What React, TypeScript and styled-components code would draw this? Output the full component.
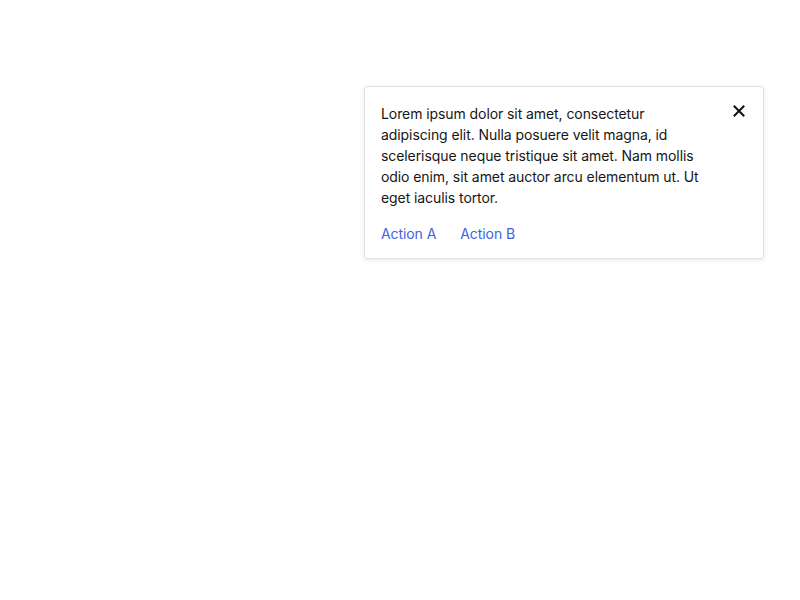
import React from 'react';
import styled, { createGlobalStyle } from 'styled-components';

const GlobalStyle = createGlobalStyle`
  html, body {
    margin: 0;
    padding: 0;
    background: #ffffff;
    font-family: Inter, "Noto Sans", sans-serif;
  }
`;

const Page = styled.div`
  display: flex;
  justify-content: flex-end;
  padding: 86px 36px 0 0;
  min-height: 600px;
  box-sizing: border-box;
`;

const Card = styled.div`
  width: 400px;
  box-sizing: border-box;
  background: #ffffff;
  border: 1px solid #e2e2e2;
  border-radius: 3px;
  box-shadow: 0 1px 4px rgba(0, 0, 0, 0.1);
  padding: 16px 16px 14px 16px;
  align-self: flex-start;
`;

const Header = styled.div`
  display: flex;
  align-items: flex-start;
  gap: 12px;
`;

const Message = styled.p`
  flex: 1;
  margin: 0;
  font-size: 14px;
  line-height: 21px;
  letter-spacing: -0.08px;
  color: #161616;
  padding-right: 8px;
`;

const CloseButton = styled.button`
  flex: none;
  width: 20px;
  height: 20px;
  margin: -2px -2px 0 0;
  padding: 0;
  border: none;
  background: transparent;
  display: flex;
  align-items: center;
  justify-content: center;
  cursor: pointer;
`;

const Actions = styled.div`
  display: flex;
  gap: 24px;
  margin-top: 15px;
`;

const ActionLink = styled.a`
  font-size: 14px;
  line-height: 21px;
  letter-spacing: -0.08px;
  color: #3d63e0;
  text-decoration: none;
  cursor: pointer;
`;

export default function App() {
  return (
    <>
      <GlobalStyle />
      <Page>
        <Card>
          <Header>
            <Message>
              Lorem ipsum dolor sit amet, consectetur adipiscing elit. Nulla posuere velit
              magna, id scelerisque neque tristique sit amet. Nam mollis odio enim, sit amet
              auctor arcu elementum ut. Ut eget iaculis tortor.
            </Message>
            <CloseButton aria-label="Close">
              <svg width="12" height="12" viewBox="0 0 12 12">
                <path d="M1.5 1.5 L10.5 10.5 M10.5 1.5 L1.5 10.5" stroke="#111" strokeWidth="2" strokeLinecap="square" />
              </svg>
            </CloseButton>
          </Header>
          <Actions>
            <ActionLink>Action A</ActionLink>
            <ActionLink>Action B</ActionLink>
          </Actions>
        </Card>
      </Page>
    </>
  );
}
